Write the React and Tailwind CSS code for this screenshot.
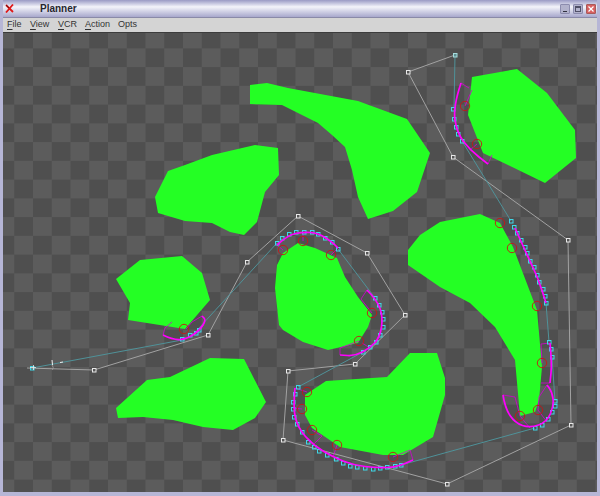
const greens = [
  "250,85 267,83 288,88 358,101 407,119 430,153 417,192 393,211 368,219 358,197 352,170 345,147 332,135 318,123 282,105 250,104",
  "255,145 278,148 279,175 265,192 257,222 244,235 230,232 212,223 185,221 158,213 155,197 168,171 185,165 212,155",
  "116,279 140,260 182,256 202,273 210,300 185,329 128,320 130,303",
  "116,408 147,380 170,377 210,358 244,359 266,402 255,418 233,430 203,427 173,420 143,417 118,418",
  "298,243 315,248 337,258 345,277 358,297 372,315 368,327 358,343 328,350 303,342 283,330 279,325 275,288 277,265 283,253",
  "410,353 437,353 445,378 445,395 433,437 403,455 383,455 340,447 312,428 305,415 305,395 326,381 387,377",
  "472,77 517,69 547,93 575,130 576,158 545,183 483,153 468,115",
  "480,214 500,223 513,247 537,310 542,367 539,400 535,412 520,416 515,360 495,327 470,303 440,287 408,265 408,250 420,235 440,222",
];
const gray = [
  "455,55 408,72 453,157 568,240 571,425 447,484 283,440 288,371 355,364 405,315 367,253 298,216 247,262 208,335 94,370 27,368",
];
const teal = [
  "32,368 182,340", "199,328 277,243", "338,249 375,298", "363,352 298,387",
  "401,465 535,428", "546,303 549,342", "552,357 555,401", "455,55 454,108", "462,141 511,221",
];
const arcs = [
  [[461,83],[453,107],[457,133],[470,150],[488,164]],
  [[163,335],[173,340],[187,339],[200,330],[206,320],[202,316]],
  [[277,245],[288,235],[303,232],[318,233],[332,242],[338,248]],
  [[367,290],[377,300],[383,317],[380,337],[370,348],[355,356],[340,355]],
  [[295,388],[293,408],[298,428],[313,445],[333,457],[353,465],[377,468],[397,467],[413,460]],
  [[515,228],[528,257],[538,278],[546,303]],
  [[550,343],[552,363],[550,383]],
  [[503,395],[505,408],[515,423],[530,428],[547,422],[554,405],[552,392],[547,385]],
];
const thin = [
  "461,83 469,88", "488,164 492,155", "163,335 165,328 172,322", "202,316 192,322 186,329", "303,232 303,241",
  "277,245 283,250", "338,248 331,255", "367,290 361,299 372,313", "340,355 340,348 359,341", "370,348 362,343",
  "295,388 307,392", "293,408 302,409", "313,445 322,436 312,430", "333,457 337,445", "413,460 410,450 393,457",
  "550,343 541,344 542,363", "550,383 541,383", "503,395 515,397 520,416", "547,385 539,397 538,410", "547,422 538,410",
  "530,428 520,416", "465,106 472,90", "477,144 470,150",
];
const circles = [
  [465,106],[477,144],[500,223],[512,248],[537,306],[542,363],[538,410],[520,416],[184,329],
  [283,250],[303,241],[331,255],[372,313],[359,341],[307,392],[302,409],[312,430],[337,445],[393,457],
];
const squares = [
  [453,109],[454,119],[456,127],[458,134],[462,141],
  [511,221],[514,227],[517,233],[521,240],[525,247],[527,253],[530,261],[534,267],[537,275],[539,282],[543,289],[545,296],[546,303],
  [549,342],[551,349],[552,357],[555,401],[555,406],[552,412],[548,419],[542,425],[535,428],
  [277,243],[282,238],[289,234],[296,232],[304,232],[312,232],[318,234],[325,238],[332,242],[338,249],
  [375,298],[379,305],[382,312],[383,319],[383,327],[380,335],[376,342],[370,347],[363,352],
  [182,339],[190,335],[196,333],[199,330],
  [298,387],[295,394],[293,402],[293,409],[294,417],[297,424],[302,432],[308,442],[314,447],[319,451],[327,455],[336,459],[343,463],[350,466],[357,467],[365,468],[373,469],[380,468],[387,467],[395,466],[401,465],
  [32,368],
];
const nodes = [[408,72],[453,157],[568,240],[571,425],[447,484],[283,440],[288,371],[355,364],[405,315],[367,253],[298,216],[247,262],[208,335],[94,370]];

function smooth(p) {
  let d = `M${p[0][0]} ${p[0][1]}`;
  for (let i = 1; i < p.length - 1; i++) {
    const mx = (p[i][0] + p[i + 1][0]) / 2;
    const my = (p[i][1] + p[i + 1][1]) / 2;
    d += ` Q${p[i][0]} ${p[i][1]} ${mx} ${my}`;
  }
  const l = p[p.length - 1];
  return d + ` L${l[0]} ${l[1]}`;
}

function Item({ first, rest, plain }) {
  return (
    <span className="leading-none">
      {plain ? first : <span className="underline underline-offset-[2px]">{first}</span>}
      {rest}
    </span>
  );
}

export default function App() {
  return (
    <div className="flex h-[496px] w-[600px] flex-col overflow-hidden border-x-[3px] border-b-[4px] border-[#b6b6d6] bg-[#b6b6d6] font-['Liberation_Sans',sans-serif]">
      <div className="-mx-[3px] flex h-[17px] shrink-0 items-center bg-linear-to-b from-[#9a9ac4] via-[#f4f4fa] via-40% to-[#a8a8cc] pl-[5px] pr-[4px]">
        <svg width="9" height="9" viewBox="0 0 9 9" className="shrink-0">
          <path d="M1 1 L8 8 M8 0.5 L1 8.5" stroke="#e01818" strokeWidth="1.8" fill="none" />
          <path d="M1 1 L4 4" stroke="#501010" strokeWidth="0.8" fill="none" />
        </svg>
        <span className="ml-[26px] text-[10px] font-bold leading-none text-[#26262e]">Planner</span>
        <div className="ml-auto flex items-center gap-[3px]">
          <div className="flex h-[10px] w-[10px] items-end justify-center rounded-[1px] border border-[#8c8cae] bg-[#b2b2cc] pb-[1px]">
            <div className="h-[1px] w-[4px] bg-[#303040]" />
          </div>
          <div className="flex h-[10px] w-[10px] items-center justify-center rounded-[1px] border border-[#8c8cae] bg-[#b2b2cc]">
            <div className="h-[6px] w-[6px] border border-t-2 border-[#505068]" />
          </div>
          <div className="flex h-[10px] w-[10px] items-center justify-center rounded-[1px] border border-[#a85a5a] bg-[#d86060]">
            <svg width="6" height="6" viewBox="0 0 6 6">
              <path d="M0.5 0.5 L5.5 5.5 M5.5 0.5 L0.5 5.5" stroke="#fff" strokeWidth="1.2" />
            </svg>
          </div>
        </div>
      </div>
      <div className="flex h-[16px] shrink-0 items-center border-y border-t-[#8a8aa8] border-b-[#3c3c3c] bg-[#d4d4d4] pl-[4px] text-[9px] text-[#333333]">
        <div className="w-[23px]"><Item first="F" rest="ile" /></div>
        <div className="w-[28px]"><Item first="V" rest="iew" /></div>
        <div className="w-[27px]"><Item first="V" rest="CR" /></div>
        <div className="w-[33px]"><Item first="A" rest="ction" /></div>
        <div><Item plain first="O" rest="pts" /></div>
      </div>
      <div className="min-h-0 flex-1 bg-[#5c5c5c] bg-[conic-gradient(#4f4f4f_25%,#5c5c5c_0_50%,#4f4f4f_0_75%,#5c5c5c_0)] bg-[length:37.5px_37.5px] bg-[position:-7.5px_-3.4px]">
        <svg className="block h-full w-full" viewBox="3 33 594 459" preserveAspectRatio="none">
          {greens.map((p, i) => <polygon key={i} points={p} fill="#24ff24" />)}
          {gray.map((p, i) => <polyline key={i} points={p} fill="none" stroke="#a2a2a2" strokeWidth="1" />)}
          {teal.map((p, i) => <polyline key={i} points={p} fill="none" stroke="#4f9299" strokeWidth="1" />)}
          {thin.map((p, i) => <polyline key={i} points={p} fill="none" stroke="#d400d4" strokeWidth="0.8" />)}
          {squares.map(([x, y], i) => (
            <rect key={i} x={x - 1.5} y={y - 1.5} width="3.5" height="3.5" fill="none" stroke="#3fd8e8" strokeWidth="1" />
          ))}
          {arcs.map((p, i) => <path key={i} d={smooth(p)} fill="none" stroke="#ff00ff" strokeWidth="1.7" strokeLinejoin="round" />)}
          {circles.map(([x, y], i) => <circle key={i} cx={x} cy={y} r="4.7" fill="none" stroke="#c81414" strokeWidth="0.9" />)}
          {nodes.map(([x, y], i) => (
            <rect key={i} x={x - 1.5} y={y - 1.5} width="3.5" height="3.5" fill="#555555" stroke="#e8e8e8" strokeWidth="1" />
          ))}
          <rect x="453.5" y="53.5" width="3.5" height="3.5" fill="#5f8f92" stroke="#a6dcdc" strokeWidth="1" />
          <path d="M30 367.5 H36 M33.5 365 V370" stroke="#e8e8e8" strokeWidth="0.8" fill="none" />
          <path d="M52 360 L52.5 365 M60 362.5 L63 362" stroke="#f0f0f0" strokeWidth="1" fill="none" />
          <path d="M52 365 Q54 367 52.5 370" stroke="#a2a2a2" strokeWidth="0.8" fill="none" />
        </svg>
      </div>
    </div>
  );
}
